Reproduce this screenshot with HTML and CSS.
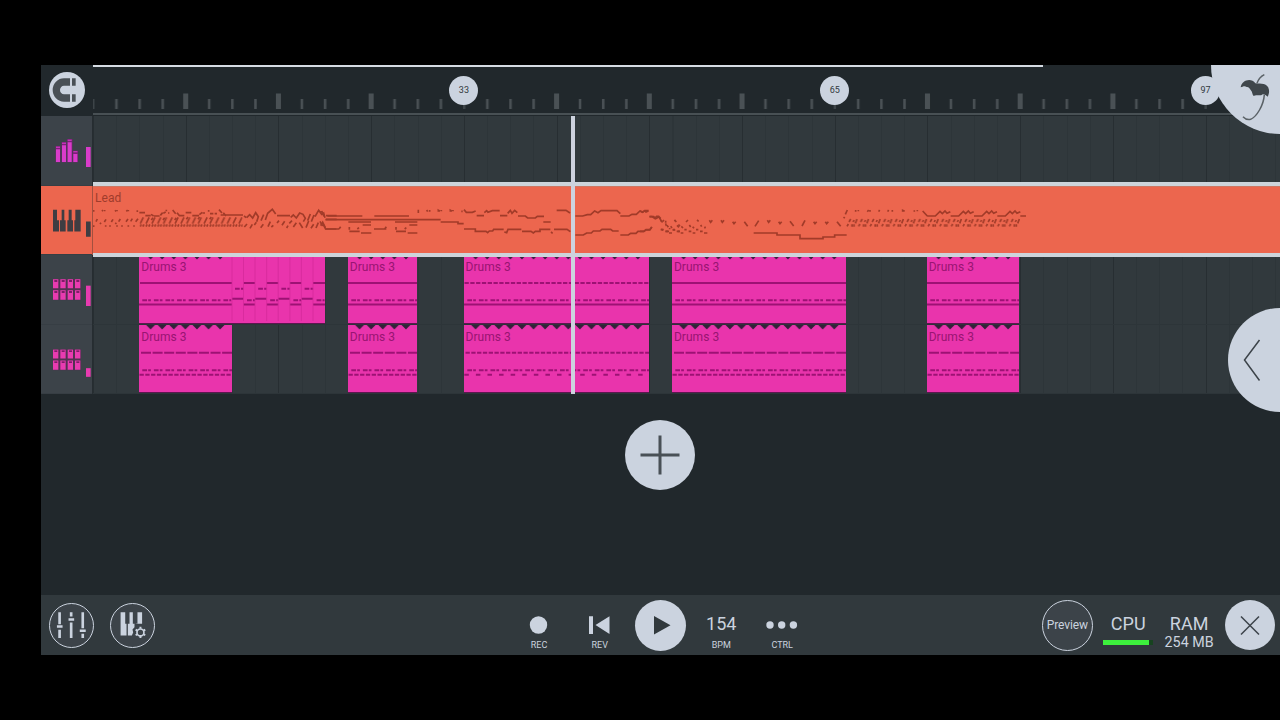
FILE: index.html
```html
<!DOCTYPE html>
<html lang="en">
<head>
<meta charset="utf-8">
<title>Playlist</title>
<link rel="stylesheet" href="styles.css">
</head>
<body>
<svg class="defs" width="0" height="0" aria-hidden="true">
  <defs>
    <pattern id="teeth" patternUnits="userSpaceOnUse" x="5.795" width="11.59" height="5"><path d="M1.4 0h8.800L5.8 4.600z" fill="#33203a"/></pattern>
    <pattern id="ticks" patternUnits="userSpaceOnUse" x="-1.5" width="92.72" height="49">
      <path fill="#4a5155" d="M-1 28.500h5v15.500h-5zM91.700 28.500h5v15.500h-5zM23.700 34h2.500v10h-2.500zM46.900 34h2.500v10h-2.500zM70 34h2.500v10h-2.500z"/>
    </pattern>
    <pattern id="run" patternUnits="userSpaceOnUse" x="310" width="17.4" height="240">
      <path class="ln" d="M3 131L12 112M3 140l3-7M11 140l3-7"/>
    </pattern>
    <pattern id="run2" patternUnits="userSpaceOnUse" x="618" width="34.800" height="240">
      <path class="ln" d="M3 139l4-7M9 126l5-9M18 133v7M24 133v7M21 126l3-6M28 130l5-13"/>
    </pattern>
    <symbol id="pads" viewBox="0 0 84 64">
      <path fill="#7a1460" d="M0 0h84v64H0z" opacity=".35"/>
      <path fill="#e83bb0" d="M0 1h16v27H0zM22 1h16v27H22zM44 1h16v27H44zM66 1h16v27H66zM0 34h16v28H0zM22 34h16v28H22zM44 34h16v28H44zM66 34h16v28H66z"/>
      <path stroke="#5c1450" stroke-width="4" d="M4 6h9M26 6h9M48 6h9M70 6h9M4 39h9M26 39h9M48 39h9M70 39h9"/>
    </symbol>
  </defs>
</svg>

<main class="app">
  <header class="ruler">
    <div class="corner">
      <svg class="magnet" viewBox="39 36 108 108"><circle cx="93" cy="90" r="54" fill="#cbd3df"/><path fill="#495056" d="M102 55H84a34 35 0 0 0 0 70h18v-22H84a12 13 0 0 1 0-26h18zM108 55h11v22h-11zM108 103h11v22h-11z"/></svg>
    </div>
    <div class="scale">
      <svg class="ticks">
        <rect x="-2" width="1200" height="49" fill="url(#ticks)"/>
        <path d="M-3 26h8v18H-3zM367 28h9v16h-9zM738 28h9v16h-9zM1108 28h9v16h-9z" fill="#21282c"/>
        <path d="M0 34h1.500v10H0zM370 34h2.500v10H370zM740.600 34h2.500v10h-2.500zM1111.400 34h2.500v10h-2.500z" fill="#3d4448"/>
      </svg>
      <span class="marker m33">33</span><span class="marker m65">65</span><span class="marker m97">97</span>
    </div>
  </header>

  <section class="tracks">
    <div class="head"><svg viewBox="15 168 156 208.5"><path fill="#7c2078" d="M59 258h14v49H59zM77 246h14v61H77zM94 237h15v70H94zM111 272h15v35h-15z"/><path fill="#d93cca" d="M60 268h12v38H60zM78 256h12v50H78zM95 247h12v59H95zM112 282h12v24h-12zM60 260h12v3H60zM78 248h12v3H78zM95 239h12v3H95zM112 274h12v3h-12zM150 261h14v60h-14z"/></svg></div>
    <div class="lane"></div>

    <div class="head lead-head"><svg viewBox="15 16.5 156 208.5"><path fill="#3f3d42" d="M51 88h12v31h6v34H51zM77 88h8v31h4v34H72v-34h5zM98 88h9v31h4v34H94v-34h4zM118 88h16v65h-19v-34h3zM150 123h14v46h-14z"/></svg></div>
    <div class="lane lead">
      <span class="name">Lead</span>
      <svg class="melody">
        <g transform="translate(-57 -6) scale(.33333)">
          <path class="ln" d="M173 90v5M198 94l3-4M206 94v-4M237 94l3-3M243 90v4M271 94l4-4M277 90v4M304 91v5
          M310 98h17M328 107h16M345 103l8 5M354 108h17M373 106l7-8M382 100l7-4M391 89v5M396 99h4M410 90l9 11M423 98l8 10M430 107h15M449 98h17M469 107h20M490 104l9-7M500 99h7M518 90v5M522 101h10M536 101h7M549 89l9 10M562 98l8 10M554 105h67M624 108l7 5M632 113l9-9 9 10 9-16 8 12-5 15M675 122l8-18M688 120l7-20 14-12 10 14M723 107h39M764 112l8-7 9 9 10-15 10 4 7 12-6 10M815 122l8-20M826 125l8-20M837 110l11-19 9 12 6-4 4 14M870 107h32M870 118h32M869 147h32
          M173 136v5M180 125l4-8M192 132l3-4M205 126l5-8M209 136v4M226 126l5-8M222 136v4M238 132l3-4M243 136v4M248 125l5-8M258 136v4M270 125l6-8M277 136v4M284 124l5-8M294 136v4M299 125l7-9
          M346 120l5-7M381 120l5-7M416 120l5-7M451 118l5-7M486 118l5-7M521 118l5-7
          M625 141l8-9M642 145l7-12M655 135l6-8M674 143l8-10M696 140l7-15M706 141l6-5M723 129l6-7M738 136l8-12M752 144l4-7M760 130l8-8M772 141l9-13M790 128l10 16M810 143l8-20M825 145l8-12M840 144l7-16M852 124l8 14M862 134l7 13"/>
          <rect x="310" y="110" width="310" height="32" fill="url(#run)"/>
        </g>
        <g transform="translate(227 -6) scale(.33333)">
          <path class="ln" d="M0 96l6-1 6 14M2 137l6-10 8 16M22 108h105M163 108h104M16 119h346M85 126h68M225 126h67M362 126h52v5h17M15 147h42M88 154h31M123 159h31M162 147h37M228 154h30M263 159h29M128 135h25M268 135h24M57 147l5-7M88 149v-8M112 147l5-4M194 147l5-7M228 149v-8M254 147l5-4
          M295 89v10M320 90l3 5M329 90v5M355 95v-4l5 3M364 90v4M391 95v-4l5 3M399 90v4M424 94h4M432 89l7 8h18l10-4M470 107h22M493 98l7-6 4 5 13-5h22M540 107h22M563 100l8-9 5 9 8-9 8 7M594 108h22l7 6h23l6-5h20M670 126h22M710 91h28l12 8
          M432 147h34v7h32l5 4 5-5h10l3-5h30M553 156l7 2 4-10h40M606 154h27l7 5 6-5h14v-6h31M693 156l5 4M702 148h39l10 7
          M766 108h22l14-4h10l12-11 10 5 9-6h48l10 9M901 108h26l9-5h13l11-10 8 4 7-5h11M989 110h12l6 6 10-6M1018 113l6 10M1028 124l4-4M1037 130l2 8M1063 120l3 3M1075 134l5 4M1024 147l5 4M1037 154h10M1049 144v4M1058 150h8M1073 154h7
          M766 165h24l10-6h14l6-6h20l6-5h26l6 5h18M901 165h24l7-5h16l6-6h17l6-4h12l7-9"/>
        </g>
        <g transform="translate(547 -6) scale(.33333)">
          <path class="ln" d="M0 93l7 3 7-4 4 4 7-3M28 110h8l8 5 6-6h6l6 7M62 121l6 6M77 122v6M81 136l4 6M92 139l4 5M104 120l5 6M111 136l6 6M124 139l5 5M138 126l6-6M148 135l4 6M158 140l4 5M171 120l5 4M182 135l3 5M194 140l2 5
          M62 149h9M76 154h8M87 159h9M98 149h7M110 154h9M122 159h8M133 149h7M146 154h8M158 159h8M168 149h7M180 154h8M192 159h10M0 154h12l6-5h12l5-8
          M208 121l4 6 5-6M243 121l4 6 5-6M278 125l4 6 5-6M313 125l10 14M345 139l11-17M382 121l4 6 5-6M416 125l4 6 5-6M450 124l11 14M486 138l9-17M521 125l4 6 5-6M556 125l4 6 5-6M591 125l11 14M611 115l3-4M616 103l6-13M647 90v5M655 94v-4M682 95l4-5M690 90v5M716 95l3-5M743 95l3-5M757 90v5M788 95v-4l6 3M823 95v-4M832 90v4M848 93l14 15
          M341 159h70v6h69v11h69v-5h35v-6h36
          M862 108h24l14-14 7 7 8-8 6 7 10-5M932 108h24l14-14 7 7 8-8 6 7 10-5M1002 108h24l14-14 7 7 8-8 6 7 10-5M1072 108h24l14-14 7 7 8-8 6 7 10-5M1141 108h17"/>
          <rect x="618" y="112" width="522" height="30" fill="url(#run2)"/>
        </g>
      </svg>
    </div>

    <div class="head"><svg viewBox="15 9 156 208.5"><use href="#pads" x="51" y="81" width="84" height="64"/><path fill="#e83bb0" d="M150 101h14v61h-14z"/></svg></div>
    <div class="lane">
      <article class="clip k-long">
        <svg>
          <rect class="teeth half"/>
          <path class="hit" d="M1 28h92M0 49.500h93"/><path class="hit pair" d="M3.300 45.300h89"/>
          <path class="hit" d="M93 43.700h11.500M116 43.700h11.500M139.200 43.700h11.500M162.400 43.700h11.500M104.500 28h11.500M127.700 28h11.500M150.900 28h11.500M174 28h12M104.500 49.500h11.500M127.700 49.500h11.500M150.900 49.500h11.500M174 49.500h12"/>
          <path class="hit" d="M96 33.700h4.700M102 33.700h2.500M119.200 33.700h4.700M125.200 33.700h2.500M142.400 33.700h4.700M148.400 33.700h2.500M165.600 33.700h4.700M171.600 33.700h2.500M108 45.300h4.700M114 45.300h2M131.200 45.300h4.700M137.200 45.300h2M154.400 45.300h4.700M160.400 45.300h2M177.600 45.300h4.700M183.600 45.300h2"/>
          <path class="split" d="M93 0v66M104.500 0v66M116 0v66M127.700 0v66M139.200 0v66M150.900 0v66M162.400 0v66M174 0v66"/>
        </svg><span class="name">Drums 3</span>
      </article>
      <article class="clip k-11"><svg><rect class="teeth"/><path class="hit" d="M0 28h400M0 49.500h400"/><path class="hit pair" d="M3.300 45.300h400"/></svg><span class="name">Drums 3</span></article>
      <article class="clip k-16"><svg><rect class="teeth"/><path class="hit" d="M0 49.500h400"/><path class="hit eighth" d="M.5 28h400"/><path class="hit pair" d="M3.300 45.300h400"/></svg><span class="name">Drums 3</span></article>
      <article class="clip k-25"><svg><rect class="teeth"/><path class="hit" d="M0 28h400M0 49.500h400"/><path class="hit pair" d="M3.300 45.300h400"/></svg><span class="name">Drums 3</span></article>
      <article class="clip k-36"><svg><rect class="teeth"/><path class="hit" d="M0 28h400M0 49.500h400"/><path class="hit pair" d="M3.300 45.300h400"/></svg><span class="name">Drums 3</span></article>
    </div>

    <div class="head"><svg viewBox="15 217.5 156 208.5"><use href="#pads" x="51" y="290" width="84" height="64"/><path fill="#e83bb0" d="M150 347h14v26h-14z"/></svg></div>
    <div class="lane">
      <article class="clip k-2"><svg><rect class="teeth"/><path class="hit whole" d="M2 27.800h400"/><path class="hit pair" d="M3.300 45.200h400"/><path class="hit eighth" d="M.5 49.700h400"/></svg><span class="name">Drums 3</span></article>
      <article class="clip k-11"><svg><rect class="teeth"/><path class="hit whole" d="M2 27.800h400"/><path class="hit pair" d="M3.300 45.200h400"/><path class="hit eighth" d="M.5 49.700h400"/></svg><span class="name">Drums 3</span></article>
      <article class="clip k-16"><svg><rect class="teeth"/><path class="hit eighth" d="M1.500 27.800h400"/><path class="hit pair" d="M3.300 45.200h400"/><path class="hit quarter" d="M.3 49.700h400"/></svg><span class="name">Drums 3</span></article>
      <article class="clip k-25"><svg><rect class="teeth"/><path class="hit whole" d="M2 27.800h400"/><path class="hit pair" d="M3.300 45.200h400"/><path class="hit eighth" d="M.5 49.700h400"/></svg><span class="name">Drums 3</span></article>
      <article class="clip k-36"><svg><rect class="teeth"/><path class="hit whole" d="M2 27.800h400"/><path class="hit pair" d="M3.300 45.200h400"/><path class="hit eighth" d="M.5 49.700h400"/></svg><span class="name">Drums 3</span></article>
    </div>
    <i class="playhead"></i>
  </section>

  <section class="empty">
    <button class="add" aria-label="Add track"><svg viewBox="0 0 70 70"><path d="M35 15.500v39M15.500 35h39" stroke="#495056" stroke-width="3"/></svg></button>
  </section>

  <footer class="bar">
    <button class="ring"><svg viewBox="38 38 136 136"><path fill="#cbd3df" d="M66 66h8v36h-8zM66 119h8v25h-8zM62 105h17v8H62zM101 66h8v13h-8zM97 84h17v8H97zM101 97h8v47h-8zM136 66h8v48h-8zM131 118h18v8h-18zM136 131h8v13h-8z"/></svg></button>
    <button class="ring"><svg viewBox="221 38 136 136"><path fill="#cbd3df" d="M253 66h14v35h4v35h-18zM280 66h10v35h5v10l-6 7 2 9-4 9h-12v-35h5zM304 66h14v35h-19v-1h5z"/><circle cx="313" cy="127" r="10.500" fill="none" stroke="#cbd3df" stroke-width="5"/><path stroke="#cbd3df" stroke-width="6" d="M313 116v-6M313 138v6M303.500 121.500l-5-3M322.500 132.500l5 3M303.500 132.500l-5 3M322.500 121.500l5-3"/></svg></button>
    <span></span>
    <div class="ctl"><svg viewBox="0 0 61 60"><circle cx="30.500" cy="30" r="8.700"/></svg><small>REC</small></div>
    <div class="ctl"><svg viewBox="0 0 61 60"><path d="M20 21.300h4V39h-4zM40.500 21.300V39L26.500 30z"/></svg><small>REV</small></div>
    <div class="ctl"><button class="play" aria-label="Play"><svg viewBox="0 0 51 51"><path d="M19 16v18.500L35.500 25.200z" fill="#31393d"/></svg></button></div>
    <div class="ctl"><strong>154</strong><small>BPM</small></div>
    <div class="ctl"><svg viewBox="0 0 61 60"><circle cx="18" cy="30" r="3.700"/><circle cx="29.700" cy="30" r="3.700"/><circle cx="41.400" cy="30" r="3.700"/></svg><small>CTRL</small></div>
    <span></span>
    <button class="preview">Preview</button>
    <div class="ctl"><strong>CPU</strong><i class="load"></i></div>
    <div class="ctl"><strong>RAM</strong><em>254 MB</em></div>
    <button class="close" aria-label="Close"><svg viewBox="0 0 50 50"><path d="M16 16.500l18 18M34 16.500l-18 18" stroke="#3c4349" stroke-width="1.500"/></svg></button>
  </footer>

  <div class="logo"><svg viewBox="183 15 207 207"><path fill="#3f464b" d="M272 82C275 60 304 52 316 70C332 72 354 68 357 90C358 98 356 104 353 110C346 104 342 101 336 104C329 108 322 104 311 108C306 104 308 96 302 90C298 84 295 80 290 81C284 76 278 80 272 82z"/><path fill="none" stroke="#5b6267" stroke-width="4.500" d="M343 44Q327 52 321 70M343 104C341 136 320 170 302 178Q289 181 279 170"/></svg></div>
  <div class="drawer"><svg viewBox="0 0 52 104"><path d="M31.500 32L16.500 52l15 20.500" fill="none" stroke="#3c4349" stroke-width="1.500"/></svg></div>
</main>
</body>
</html>
```

FILE: styles.css
```css
* { box-sizing: border-box; }
body { margin: 0; width: 1280px; height: 720px; overflow: hidden; padding: 65px 0 0 41px; background: #000; font-family: Roboto, "Noto Sans", sans-serif; color: #cbd3df; }
svg { display: block; }
.defs { position: absolute; }
button { padding: 0; border: 0; font: inherit; color: inherit; }
.app { position: relative; width: 1239px; height: 590px; overflow: hidden; display: grid; grid-template-rows: 51px 278px 201px 60px; background: #21282c; }

.ruler { display: grid; grid-template-columns: 52px 1fr; }
.corner { padding: 7px 0 0 8px; }
.magnet { width: 36px; height: 36px; }
.scale { position: relative; height: 49.500px; border-bottom: 2px solid #485054; background: linear-gradient(#d5dbe3, #d5dbe3) 0 0 / 950px 2px no-repeat; overflow: hidden; }
.ticks { width: 100%; height: 47px; }
.marker { position: absolute; top: 11px; width: 29px; height: 29px; border-radius: 50%; background: #cbd3df; color: #31383c; font-size: 9px; line-height: 28px; text-align: center; }
.m33 { left: 356.400px; }
.m65 { left: 727.200px; }
.m97 { left: 1098px; }

.tracks { position: relative; display: grid; grid-template-columns: 52px 1fr; grid-template-rows: repeat(4, 69.500px); }
.head { background: #3c4349; border-right: 1px solid #262d31; box-shadow: inset 0 -1px #373e44; }
.head svg { width: 52px; height: 69.500px; }
.lane { display: grid; grid-template-columns: repeat(103, 11.590px); overflow: hidden; border-bottom: 1px solid #2d3539;
  background: repeating-linear-gradient(90deg, #272e32 0 1px, transparent 1px 92.720px), repeating-linear-gradient(90deg, #2d3539 0 1px, transparent 1px 23.180px), #31393d; }
.lead-head { background: #ec664e; border-color: #a3503f; }
.lead { display: block; position: relative; z-index: 1; height: 75px; margin-top: -3.500px; border: solid #cdd4db; border-width: 4px 0; background: #ec664e; box-shadow: inset 0 1px #ce7763; }
.name { font-size: 12px; line-height: 14px; letter-spacing: .05px; }
.lead .name { position: absolute; left: 2px; top: 5px; color: #a03c2c; }
.melody { width: 1187px; height: 67px; }
.ln { fill: none; stroke: #a13b29; stroke-width: 5; }

.clip { display: grid; grid-row: 1; height: 67.500px; background: #e934ac; overflow: hidden; box-shadow: 0 2px #5c174f; }
.clip > * { grid-area: 1 / 1; }
.clip svg { width: 100%; height: 67.500px; }
.clip .name { padding: 5.400px 0 0 2px; color: #981572; }
.k-long { grid-column: 5 / span 16; }
.k-2 { grid-column: 5 / span 8; }
.k-11 { grid-column: 23 / span 6; }
.k-16 { grid-column: 33 / span 16; }
.k-25 { grid-column: 51 / span 15; }
.k-36 { grid-column: 73 / span 8; }
.teeth { x: 5.800px; width: calc(100% - 11.600px); height: 5px; fill: url(#teeth); }
.teeth.half { width: 81px; }
.hit { fill: none; stroke: #9d1274; stroke-width: 1.900; }
.pair { stroke-dasharray: 4.700 1.200 2.700 2.990; }
.eighth { stroke-dasharray: 4.300 1.495; }
.whole { stroke-dasharray: 10 1.590; }
.quarter { stroke-dasharray: 4.500 7.090; }
.split { stroke: #d42a9b; stroke-width: .8; }
.playhead { position: absolute; z-index: 2; left: 530px; top: 0; width: 4px; height: 278px; background: #cdd2de; }

.empty { display: flex; justify-content: center; align-items: flex-start; padding: 26px 1px 0 0; }
.add { width: 70px; height: 70px; border-radius: 50%; background: #cbd3df; }

.bar { display: grid; grid-template-columns: repeat(2, 60.800px) 345.900px repeat(5, 60.800px) 224.400px repeat(4, 60.900px); align-items: center; justify-items: center; background: #31393d; }
.ring { width: 45px; height: 45px; border: 1px solid #cbd3df; border-radius: 50%; background: #3c4349; }
.ring svg { margin: -1px; width: 45px; height: 45px; }
.ctl { display: grid; width: 100%; height: 60px; justify-items: center; }
.ctl > * { grid-area: 1 / 1; }
.ctl > svg { width: 61px; height: 60px; fill: #cbd3df; }
.ctl small { align-self: end; margin-bottom: 4.500px; font-size: 9px; line-height: 12px; }
.ctl strong { margin-top: 18px; font-size: 18px; font-weight: 400; line-height: 22px; height: 22px; }
.ctl em { margin-top: 39px; font-size: 14.300px; font-style: normal; line-height: 17px; white-space: nowrap; height: 17px; }
.play { align-self: center; width: 51px; height: 51px; border-radius: 50%; background: #cbd3df; }
.load { width: 50px; height: 5px; margin-top: 45px; background: linear-gradient(90deg, #3df03d 46px, #174320 46px); }
.preview { width: 51px; height: 51px; border: 1px solid #cbd3df; border-radius: 50%; background: #3c4349; font-size: 12px; letter-spacing: -.1px; }
.close { width: 50px; height: 50px; border-radius: 50%; background: #cbd3df; }

.logo { position: absolute; z-index: 3; top: -69px; right: -69px; width: 138px; height: 138px; padding: 69px 0 0; border-radius: 50%; background: #cbd3df; overflow: hidden; }
.logo svg { width: 69px; height: 69px; }
.drawer { position: absolute; z-index: 3; top: 243px; right: 0; width: 52px; height: 104px; border-radius: 52px 0 0 52px; background: #cbd3df; }
```
